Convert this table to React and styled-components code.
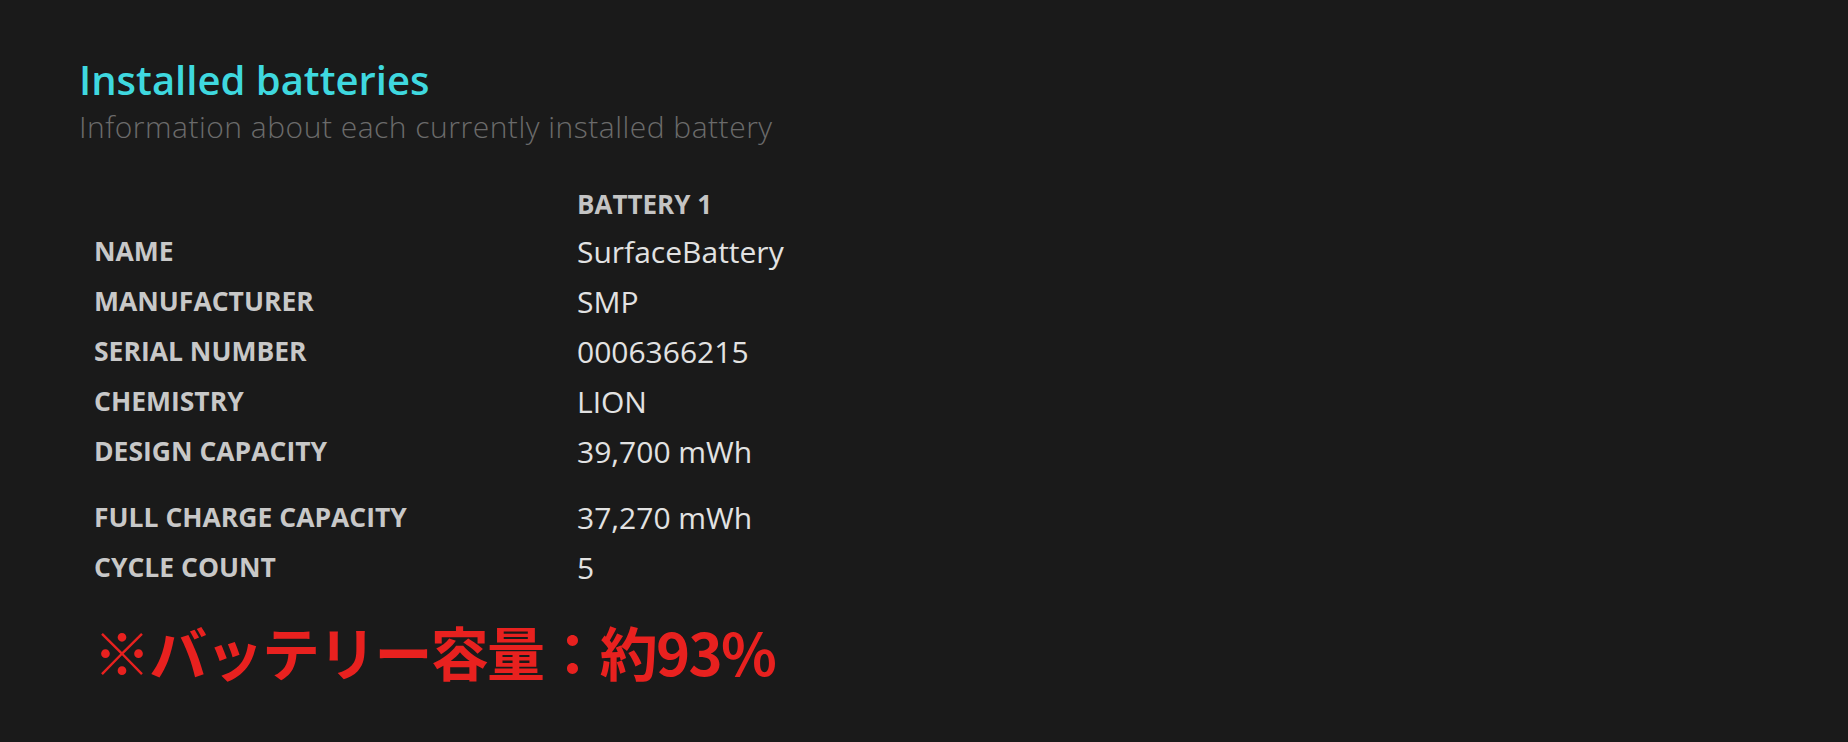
import React from 'react'
import styled, { createGlobalStyle } from 'styled-components'

const Global = createGlobalStyle`
    html, body {
        margin: 0;
        padding: 0;
        background: #1a1a1a;
    }
    body {
        font-family: "Open Sans", "Noto Sans", sans-serif;
    }
`

const rows = [
    { label: 'NAME', value: 'SurfaceBattery' },
    { label: 'MANUFACTURER', value: 'SMP' },
    { label: 'SERIAL NUMBER', value: '0006366215' },
    { label: 'CHEMISTRY', value: 'LION' },
    { label: 'DESIGN CAPACITY', value: '39,700 mWh' },
    { label: 'FULL CHARGE CAPACITY', value: '37,270 mWh', spaced: true },
    { label: 'CYCLE COUNT', value: '5' },
]

export default function App() {
    return (
        <Page>
            <Global />
            <Title>Installed batteries</Title>
            <Subtitle>Information about each currently installed battery</Subtitle>
            <Table>
                <thead>
                    <tr>
                        <th></th>
                        <HeadCell>BATTERY 1</HeadCell>
                    </tr>
                </thead>
                <tbody>
                    {rows.map(r =>
                        <Row key={r.label} $spaced={r.spaced}>
                            <Label>{r.label}</Label>
                            <Value>{r.value}</Value>
                        </Row>
                    )}
                </tbody>
            </Table>
            <Note>※バッテリー容量：約93%</Note>
        </Page>
    )
}

const Page = styled.div`
    width: 1848px;
    height: 742px;
    box-sizing: border-box;
    padding: 55px 0 0 79px;
    background: #1a1a1a;
    overflow: hidden;
`

const Title = styled.h1`
    margin: 0;
    font-size: 40px;
    font-weight: 600;
    line-height: 50px;
    color: #3fd8df;
`

const Subtitle = styled.div`
    margin-top: 2px;
    font-size: 30px;
    font-weight: 300;
    line-height: 40px;
    letter-spacing: 0.5px;
    color: #6b6b6b;
`

const Table = styled.table`
    margin: 35px 0 0 15px;
    border-collapse: collapse;
`

const HeadCell = styled.th`
    text-align: left;
    padding: 0;
    height: 44px;
    font-size: 26px;
    font-weight: 700;
    color: #c4c4c4;
`

const Row = styled.tr`
    td {
        height: 50px;
        padding: ${p => p.$spaced ? '16px' : '0'} 0 0 0;
        vertical-align: middle;
    }
`

const Label = styled.td`
    width: 483px;
    font-size: 26.5px;
    font-weight: 700;
    color: #c8c8c8;
`

const Value = styled.td`
    font-size: 30px;
    font-weight: 400;
    color: #e2e2e2;
`

const Note = styled.div`
    margin: 24px 0 0 14px;
    font-family: "Noto Sans CJK JP", sans-serif;
    font-size: 58px;
    font-weight: 700;
    line-height: 70px;
    color: #e8211f;
    letter-spacing: -1.7px;
`
